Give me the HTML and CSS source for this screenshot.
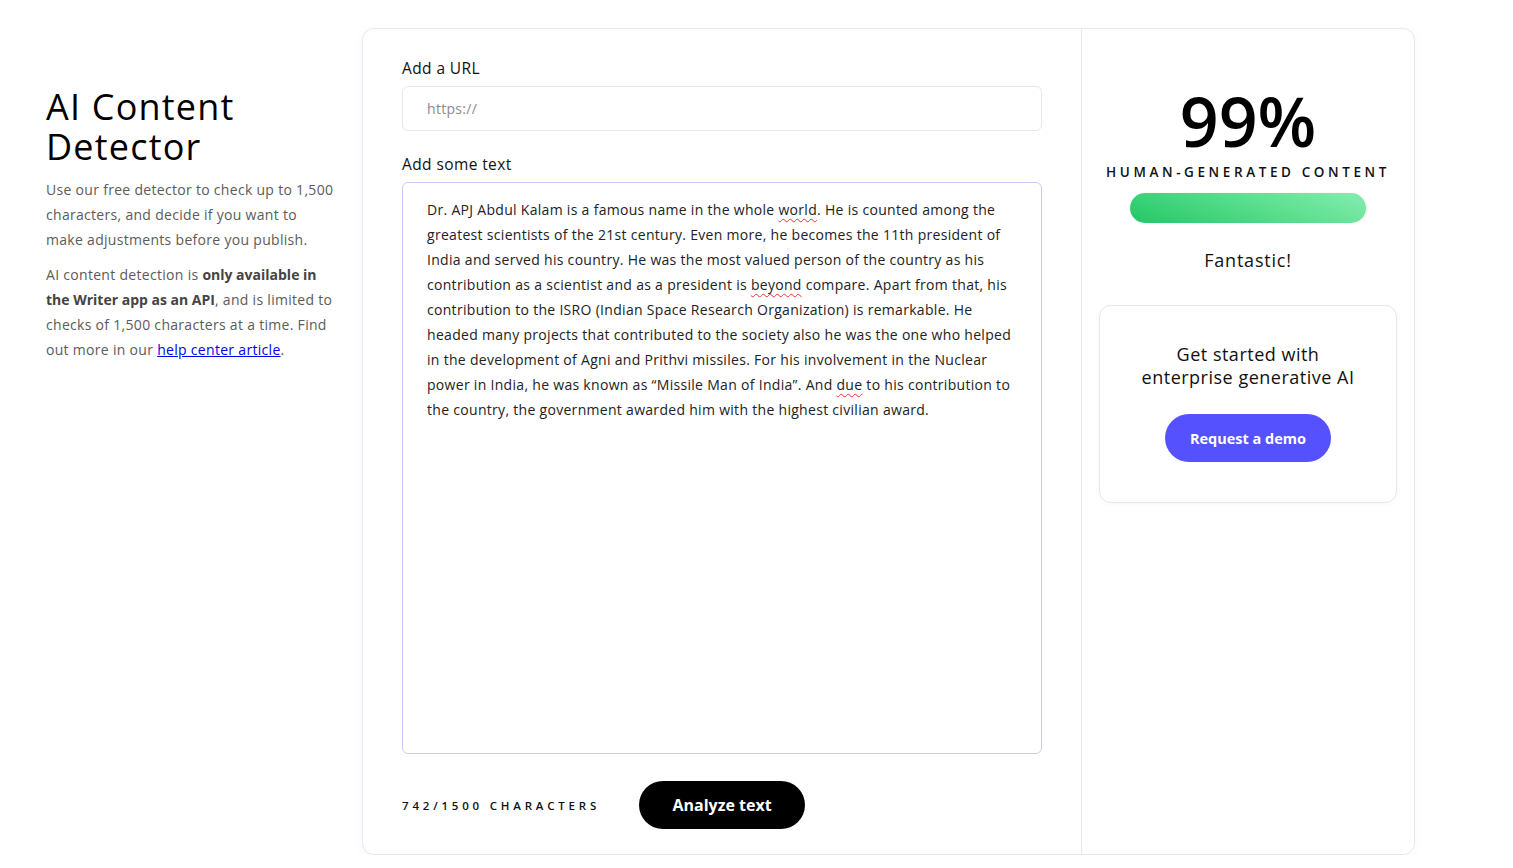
FILE: index.html
```html
<!DOCTYPE html>
<html>
<head>
<meta charset="utf-8">
<link rel="stylesheet" href="styles.css">
</head>
<body>
<div class="page">
  <aside class="intro">
    <h1 class="title">AI Content<br>Detector</h1>
    <p class="desc">Use our free detector to check up to 1,500<br>characters, and decide if you want to<br>make adjustments before you publish.</p>
    <p class="desc">AI content detection is <b>only available in<br>the Writer app as an API</b>, and is limited to<br>checks of 1,500 characters at a time. Find<br>out more in our <a href="#" class="link">help center article</a>.</p>
  </aside>
  <main class="card">
    <section class="editor">
      <label class="label">Add a URL</label>
      <div class="url">https://</div>
      <label class="label label-text">Add some text</label>
      <div class="textbox">Dr. APJ Abdul Kalam is a famous name in the whole <span class="sp">world</span>. He is counted among the<br>greatest scientists of the 21st century. Even more, he becomes the 11th president of<br>India and served his country. He was the most valued person of the country as his<br>contribution as a scientist and as a president is <span class="sp">beyond</span> compare. Apart from that, his<br>contribution to the ISRO (Indian Space Research Organization) is remarkable. He<br>headed many projects that contributed to the society also he was the one who helped<br>in the development of Agni and Prithvi missiles. For his involvement in the Nuclear<br>power in India, he was known as “Missile Man of India”. And <span class="sp">due</span> to his contribution to<br>the country, the government awarded him with the highest civilian award.</div>
      <div class="actions">
        <span class="count">742/1500 CHARACTERS</span>
        <button class="analyze">Analyze text</button>
      </div>
    </section>
    <section class="result">
      <div class="score">99%</div>
      <div class="score-label">HUMAN-GENERATED CONTENT</div>
      <div class="bar"></div>
      <div class="verdict">Fantastic!</div>
      <div class="cta">
        <p class="cta-text">Get started with<br>enterprise generative AI</p>
        <button class="demo">Request a demo</button>
      </div>
    </section>
  </main>
</div>
</body>
</html>
```
FILE: styles.css
```css
* { box-sizing: border-box; }
html, body { margin: 0; padding: 0; background: #fff; }
body { font-family: "Open Sans", "Noto Sans", sans-serif; color: #111; }

.page {
  display: flex;
  align-items: flex-start;
  padding: 28px 0 0 46px;
  gap: 20px;
}

.intro { width: 296px; padding-top: 59px; }
.title {
  margin: 0 0 10px;
  font-size: 36px;
  line-height: 40px;
  font-weight: 500;
  color: #000;
  letter-spacing: 1.2px;
}
.desc {
  margin: 0 0 10px;
  font-size: 14px;
  line-height: 25px;
  letter-spacing: 0.3px;
  color: #5b5b5b;
  white-space: nowrap;
}
.desc b { color: #444; font-weight: 700; letter-spacing: 0; }
.link { color: #0000ee; text-decoration: underline; }

.card {
  width: 1053px;
  height: 827px;
  border: 1px solid #e6e7f1;
  border-radius: 12px;
  display: flex;
  box-shadow: 0 2px 10px rgba(90, 100, 200, 0.05);
}

.editor {
  width: 720px;
  padding: 29px 39px 0 39px;
  border-right: 1px solid #e6e7f1;
  display: flex;
  flex-direction: column;
}
.label {
  font-size: 15.5px;
  line-height: 20px;
  letter-spacing: 0.4px;
  color: #111;
  margin-bottom: 8px;
}
.label-text { margin-top: 23px; }
.url {
  height: 45px;
  border: 1px solid #e6e7f1;
  border-radius: 6px;
  padding: 0 24px;
  display: flex;
  align-items: center;
  font-size: 14px;
  letter-spacing: 0.3px;
  color: #8b8b8b;
}
.textbox {
  height: 572px;
  border: 1px solid #c6ccf9;
  border-radius: 6px;
  padding: 14px 20px 0 24px;
  font-size: 14px;
  letter-spacing: 0.3px;
  line-height: 25px;
  color: #222;
  white-space: nowrap;
  overflow: hidden;
}
.sp {
  text-decoration: underline wavy #e33;
  text-decoration-thickness: 1px;
  text-underline-offset: 3px;
}
.actions {
  display: flex;
  align-items: center;
  margin-top: 27px;
  gap: 39px;
}
.count {
  font-size: 11.5px;
  font-weight: 600;
  letter-spacing: 3.8px;
  color: #111;
}
.analyze {
  width: 166px;
  height: 48px;
  border: 0;
  border-radius: 24px;
  background: #000;
  color: #fff;
  font-family: inherit;
  font-size: 16px;
  font-weight: 700;
}

.result {
  flex: 1;
  display: flex;
  flex-direction: column;
  align-items: center;
  padding: 50px 17px 0 17px;
}
.score {
  font-size: 68px;
  line-height: 84px;
  font-weight: 600;
  color: #000;
}
.score-label {
  font-size: 13.5px;
  font-weight: 600;
  letter-spacing: 3.6px;
  color: #111;
}
.bar {
  width: 236px;
  height: 30px;
  border-radius: 15px;
  margin-top: 12px;
  background: linear-gradient(20deg, #22c766 0%, #5ee091 60%, #86edb0 100%);
  box-shadow: 1px 0 2px rgba(0,0,0,0.08);
}
.verdict {
  margin-top: 25px;
  font-size: 18px;
  line-height: 24px;
  letter-spacing: 0.8px;
  color: #111;
}
.cta {
  width: 298px;
  height: 198px;
  margin-top: 33px;
  border: 1px solid #e6e7f1;
  border-radius: 12px;
  display: flex;
  flex-direction: column;
  align-items: center;
  padding-top: 37px;
  box-shadow: 0 1px 4px rgba(90, 100, 200, 0.05);
}
.cta-text {
  margin: 0;
  text-align: center;
  font-size: 18px;
  line-height: 23px;
  letter-spacing: 0.5px;
  color: #111;
}
.demo {
  margin-top: 25px;
  width: 166px;
  height: 48px;
  border: 0;
  border-radius: 24px;
  background: #5551ff;
  color: #fff;
  font-family: inherit;
  font-size: 14.5px;
  font-weight: 700;
}
```
